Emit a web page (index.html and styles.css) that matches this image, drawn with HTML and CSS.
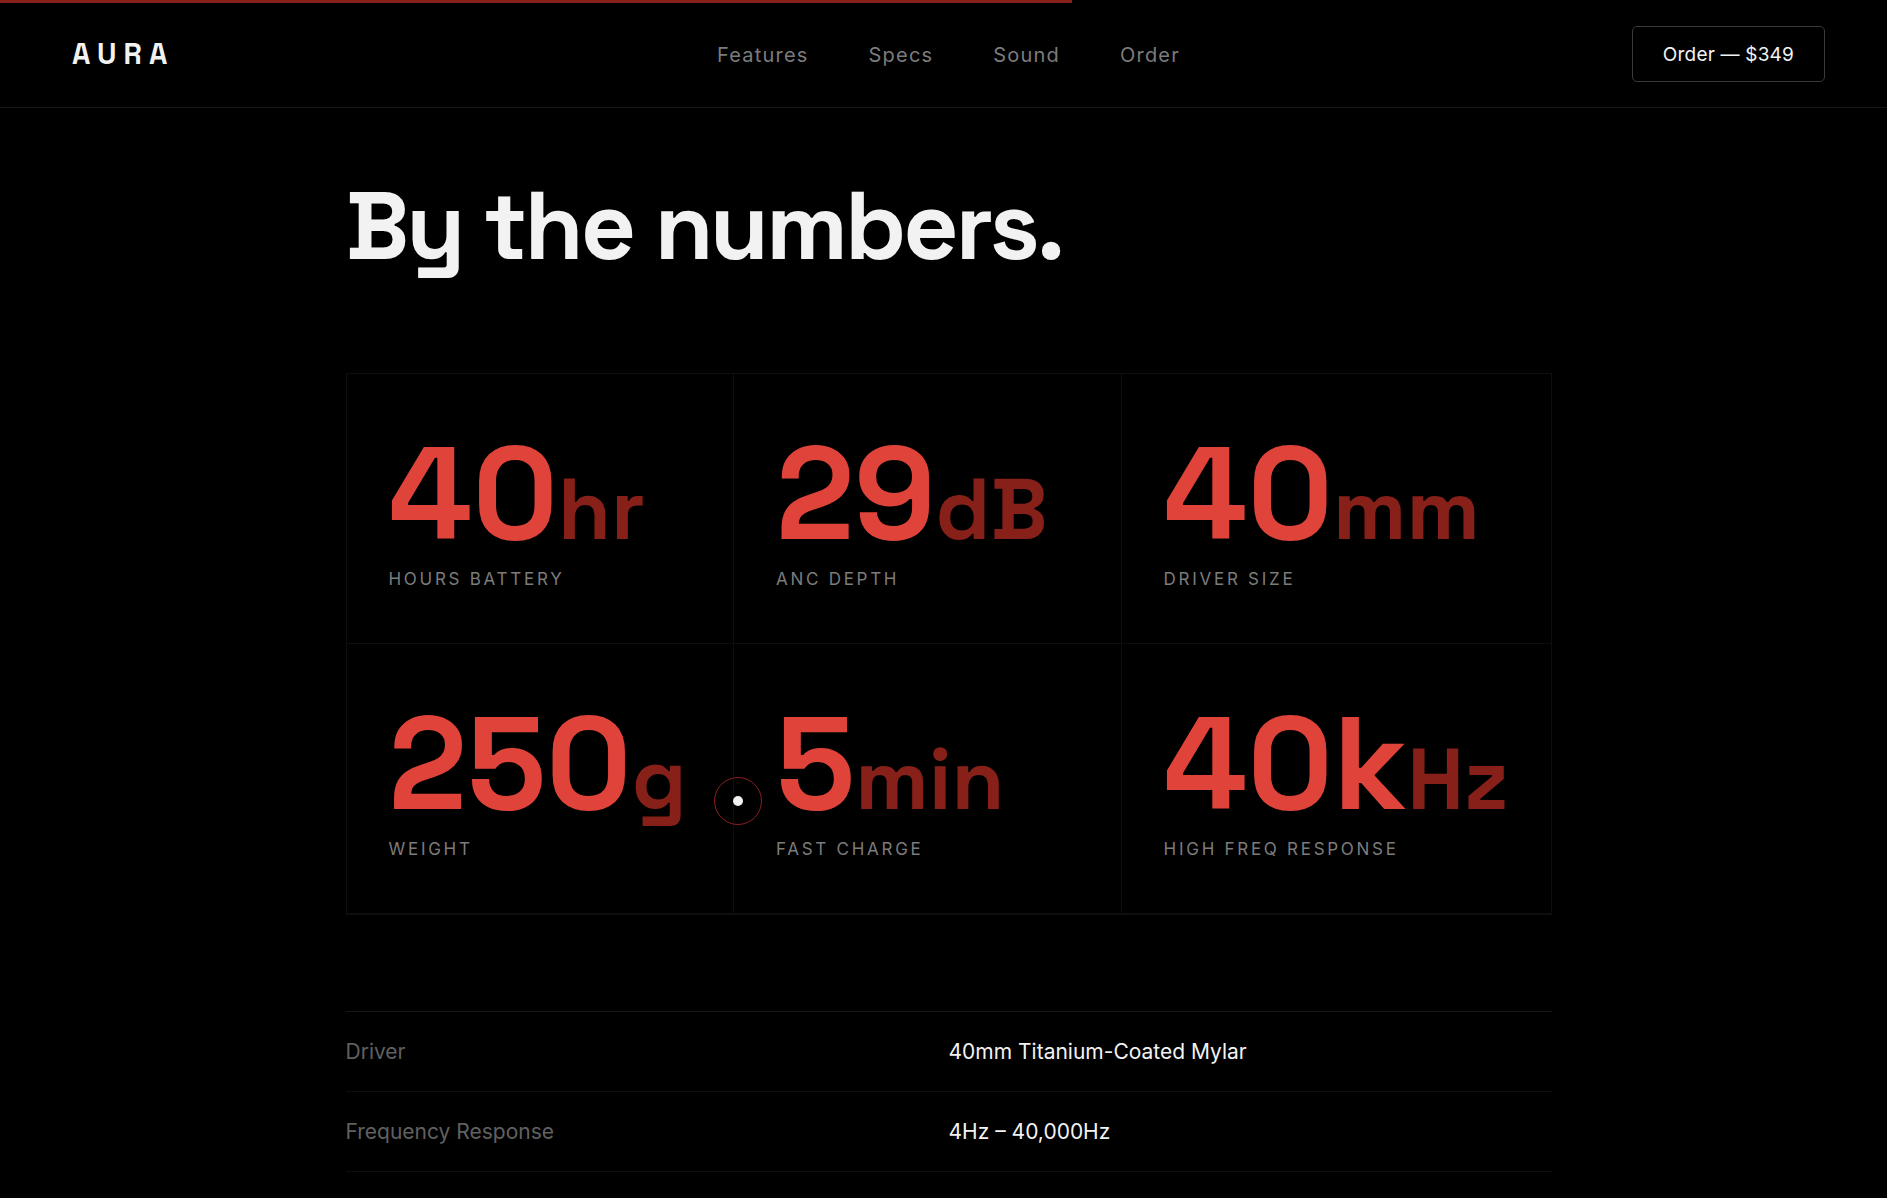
FILE: index.html
```html
<!DOCTYPE html>
<html lang="en">
<head>
    <meta charset="UTF-8">
    <meta name="viewport" content="width=device-width, initial-scale=1.0">
    <title>AURA</title>
    <link rel="stylesheet" href="styles.css">
</head>
<body>
    <div class="scroll-progress"></div>
    <header class="header">
        <a href="#" class="logo">AURA</a>
        <nav class="nav-links">
            <a href="#features">Features</a>
            <a href="#specs">Specs</a>
            <a href="#sound">Sound</a>
            <a href="#order">Order</a>
        </nav>
        <button type="button" class="order-btn">Order — $349</button>
    </header>

    <main class="container" id="specs">
        <h2 class="section-title">By the numbers.</h2>

        <div class="stats-grid">
            <div class="stat">
                <div class="stat-value">40<span class="unit">hr</span></div>
                <div class="stat-label">HOURS BATTERY</div>
            </div>
            <div class="stat">
                <div class="stat-value">29<span class="unit">dB</span></div>
                <div class="stat-label">ANC DEPTH</div>
            </div>
            <div class="stat">
                <div class="stat-value">40<span class="unit">mm</span></div>
                <div class="stat-label">DRIVER SIZE</div>
            </div>
            <div class="stat">
                <div class="stat-value">250<span class="unit">g</span></div>
                <div class="stat-label">WEIGHT</div>
            </div>
            <div class="stat">
                <div class="stat-value">5<span class="unit">min</span></div>
                <div class="stat-label">FAST CHARGE</div>
            </div>
            <div class="stat">
                <div class="stat-value">40k<span class="unit">Hz</span></div>
                <div class="stat-label">HIGH FREQ RESPONSE</div>
            </div>
        </div>

        <table class="spec-table">
            <tr>
                <th scope="row">Driver</th>
                <td>40mm Titanium-Coated Mylar</td>
            </tr>
            <tr>
                <th scope="row">Frequency Response</th>
                <td>4Hz – 40,000Hz</td>
            </tr>
        </table>
    </main>

    <!-- Custom cursor -->
    <div class="cursor"></div>
</body>
</html>
```
FILE: styles.css
```css
* {
    margin: 0;
    padding: 0;
    box-sizing: border-box;
}
html {
    background: #000;
    overflow-x: hidden;
}
body {
    margin-right: -10px;
    background: #000;
    color: #f2f2f2;
    font-family: Inter, "Liberation Sans", sans-serif;
}
.scroll-progress {
    position: fixed;
    top: 0;
    left: 0;
    width: 1072px;
    height: 3px;
    background: #88201a;
}
.header {
    display: grid;
    grid-template-columns: 1fr auto 1fr;
    align-items: center;
    padding: 26px 72px 25px;
    border-bottom: 1px solid #171717;
}
.logo {
    color: #f2f2f2;
    font-family: "Space Grotesk", Inter, sans-serif;
    font-size: 29px;
    font-weight: 700;
    line-height: 38px;
    letter-spacing: 7px;
    text-decoration: none;
}
.nav-links {
    display: flex;
    gap: 60px;
    padding-top: 2px;
}
.nav-links a {
    color: #7c7c7c;
    font-size: 20px;
    line-height: 24px;
    letter-spacing: 0.06em;
    text-decoration: none;
}
.nav-links a:hover {
    color: #f2f2f2;
}
.order-btn {
    justify-self: end;
    height: 56px;
    padding: 0 30px;
    background: transparent;
    border: 1px solid #3a3a3a;
    border-radius: 5px;
    color: #f2f2f2;
    font-family: inherit;
    font-size: 19px;
    letter-spacing: 0.01em;
}
.container {
    max-width: 1206px;
    margin: 0 auto;
    padding-top: 68px;
}
.section-title {
    margin-bottom: 97px;
    font-family: "Space Grotesk", Inter, sans-serif;
    font-size: 96px;
    font-weight: 700;
    line-height: 100px;
    letter-spacing: -3px;
}
.stats-grid {
    display: grid;
    grid-template-columns: repeat(3, 1fr);
    margin-bottom: 96px;
    border: 1px solid #0e0e0e;
}
.stat {
    height: 270px;
    padding: 54px 42px 0;
    border-right: 1px solid #0e0e0e;
    border-bottom: 1px solid #0e0e0e;
}
.stat:nth-child(3n) {
    border-right: none;
}
.stat-value {
    color: #e04339;
    font-family: "Space Grotesk", Inter, sans-serif;
    font-size: 132px;
    font-weight: 700;
    line-height: 132px;
    white-space: nowrap;
}
.unit {
    color: #88201a;
    font-size: 86px;
    line-height: 86px;
}
.stat-label {
    margin-top: 7px;
    color: #7c7c7c;
    font-size: 17px;
    line-height: 24px;
    letter-spacing: 0.16em;
}
.spec-table {
    width: 100%;
    table-layout: fixed;
    border-collapse: collapse;
    border-top: 1px solid #171717;
}
.spec-table th,
.spec-table td {
    height: 80px;
    border-bottom: 1px solid #0e0e0e;
    font-size: 21px;
    font-weight: 400;
    text-align: left;
}
.spec-table th {
    color: #606060;
}
.cursor {
    position: fixed;
    top: 777px;
    left: 714px;
    width: 48px;
    height: 48px;
    border: 1px solid #88201a;
    border-radius: 50%;
    pointer-events: none;
}
.cursor::after {
    content: "";
    position: absolute;
    top: 18px;
    left: 18px;
    width: 10px;
    height: 10px;
    border-radius: 50%;
    background: #f2f2f2;
}
```
